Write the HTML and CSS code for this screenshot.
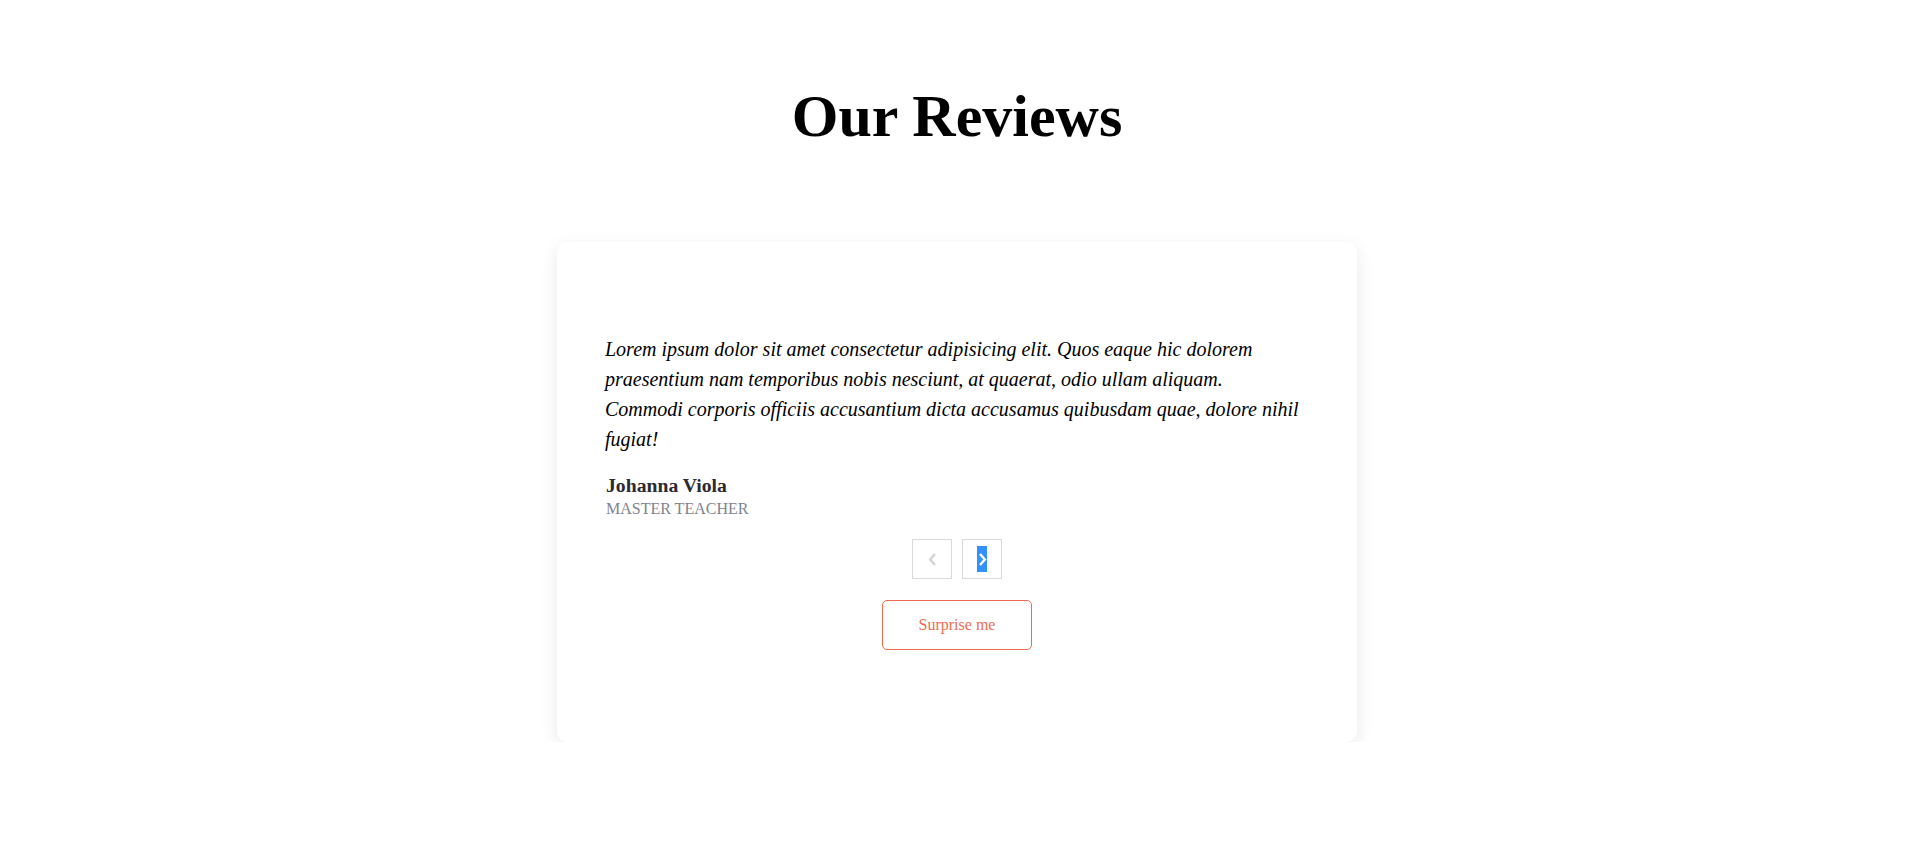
FILE: index.html
```html
<!DOCTYPE html>
<html lang="en">
<head>
<meta charset="utf-8">
<title>Our Reviews</title>
<link rel="stylesheet" href="styles.css">
</head>
<body>
<main class="page">
  <h1 class="title">Our Reviews</h1>
  <article class="review">
    <p class="info">Lorem ipsum dolor sit amet consectetur adipisicing elit. Quos eaque hic dolorem praesentium nam temporibus nobis nesciunt, at quaerat, odio ullam aliquam. Commodi corporis officiis accusantium dicta accusamus quibusdam quae, dolore nihil fugiat!</p>
    <h4 class="author">Johanna Viola</h4>
    <p class="job">MASTER TEACHER</p>
    <div class="btn-row">
      <button class="nav-btn" type="button" aria-label="previous">
        <span class="chev">
          <svg width="9" height="13" viewBox="0 0 9 13"><path d="M7 1 L2.2 6.5 L7 12" fill="none" stroke="#d2d3d8" stroke-width="2.4"/></svg>
        </span>
      </button>
      <button class="nav-btn" type="button" aria-label="next">
        <span class="chev sel">
          <svg width="9" height="13" viewBox="0 0 9 13"><path d="M2 1 L6.8 6.5 L2 12" fill="none" stroke="#ffffff" stroke-width="2.4"/></svg>
        </span>
      </button>
    </div>
    <button class="random-btn" type="button">Surprise me</button>
  </article>
</main>
</body>
</html>
```
FILE: styles.css
```css
* {
  box-sizing: border-box;
}
body {
  margin: 0;
  background: #ffffff;
  font-family: "Liberation Serif", "Times New Roman", serif;
  color: #000;
}
.page {
  display: flex;
  flex-direction: column;
  align-items: center;
  padding: 82px 3px 0 0;
}
.title {
  margin: 0;
  font-size: 60px;
  line-height: 69px;
  font-weight: 700;
}
.review {
  margin-top: 91px;
  width: 800px;
  height: 500px;
  background: #fff;
  border-radius: 10px;
  box-shadow: 0 5px 18px rgba(0, 0, 0, 0.09);
  padding: 0 48px;
  display: flex;
  flex-direction: column;
  justify-content: center;
}
.info {
  margin: 0;
  max-width: 700px;
  font-style: italic;
  font-size: 20px;
  line-height: 30px;
}
.author {
  margin: 20px 0 0;
  font-size: 19.7px;
  line-height: 23px;
  font-weight: 700;
  color: #2b2b2f;
  padding-left: 1px;
}
.job {
  margin: 0;
  font-size: 16px;
  line-height: 24px;
  color: #7e8391;
  padding-left: 1px;
}
.btn-row {
  margin-top: 18px;
  display: flex;
  justify-content: center;
  gap: 10px;
}
.nav-btn {
  width: 40px;
  height: 40px;
  padding: 0;
  background: #fff;
  border: 1px solid #d9d9d9;
  display: flex;
  align-items: center;
  justify-content: center;
  cursor: pointer;
}
.chev {
  width: 10px;
  height: 26px;
  display: flex;
  align-items: center;
  justify-content: center;
}
.chev.sel {
  background: #3390ff;
}
.random-btn {
  margin: 21px 0 0;
  align-self: center;
  width: 150px;
  height: 50px;
  background: #fff;
  border: 1px solid #ee6c4d;
  border-radius: 5px;
  color: #ee6c4d;
  font-family: "Liberation Serif", "Times New Roman", serif;
  font-size: 16px;
  cursor: pointer;
}
```
